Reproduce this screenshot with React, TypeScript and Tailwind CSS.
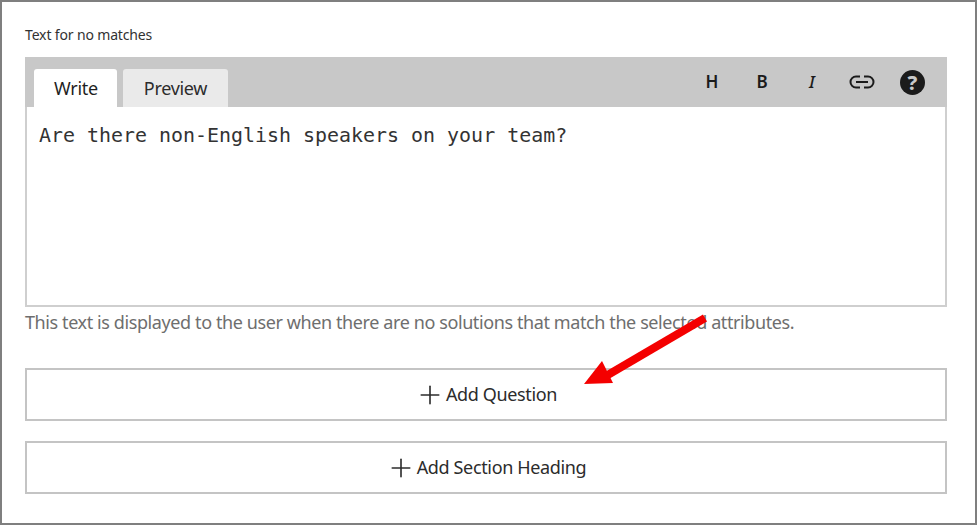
import { Plus } from "lucide-react";

const sans = "font-['Noto_Sans','Open_Sans',sans-serif]";

function AddButton({ label }: { label: string }) {
  return (
    <button className="flex h-[53px] w-full items-center justify-center gap-[1px] border-2 border-[#c4c4c4] bg-white text-[#2c2c2c]">
      <Plus size={30} strokeWidth={1.3} />
      <span className="text-[18px] tracking-[-0.35px]">{label}</span>
    </button>
  );
}

export default function App() {
  return (
    <div className={`relative h-[525px] w-[977px] overflow-hidden bg-white ${sans}`}>
      <div className="flex h-[525px] w-[977px] flex-col border-2 border-[#7f7f7f] pl-[23px] pr-[28px] pt-[25px]">
        <label className="text-[14px] leading-[16px] tracking-[-0.15px] text-[#323232]">Text for no matches</label>

        <div className="mt-[14px] flex h-[50px] items-end justify-between bg-[#c8c8c8] pl-[9px] pr-[22px]">
          <div className="flex gap-[6px]">
            <div className="flex h-[38px] w-[83px] items-center justify-center rounded-t-[3px] bg-white pl-[1px] text-[18px] tracking-[-0.3px] text-[#1f1f1f]">
              Write
            </div>
            <div className="flex h-[38px] w-[105px] items-center justify-center rounded-t-[3px] bg-[#eaeaea] text-[18px] tracking-[-0.3px] text-[#2c2c2c]">
              Preview
            </div>
          </div>
          <div className="flex h-[50px] items-center text-[#1b1b1b]">
            <span className="w-[14px] text-center text-[17px] font-semibold">H</span>
            <span className="ml-[37px] w-[12px] text-center text-[17px] font-semibold">B</span>
            <span className="ml-[41px] w-[6px] text-center text-[17px] font-medium italic">I</span>
            <svg viewBox="0 0 26 14" className="ml-[34px] h-[14px] w-[26px]" fill="none" stroke="currentColor" strokeWidth="2">
              <path d="M11 1.5 H7 a5.5 5.5 0 0 0 0 11 h4" />
              <path d="M15 1.5 h4 a5.5 5.5 0 0 1 0 11 h-4" />
              <path d="M7 7 H19" />
            </svg>
            <svg viewBox="0 0 25 25" className="ml-[25px] h-[25px] w-[25px]">
              <circle cx="12.5" cy="12.5" r="12.5" fill="#1b1b1b" />
              <text x="12.5" y="20" textAnchor="middle" fontSize="20" fontWeight="800" fill="#c8c8c8" fontFamily="Noto Sans, sans-serif">?</text>
            </svg>
          </div>
        </div>

        <div className="h-[200px] border-x-2 border-b-2 border-[#cfcfcf] bg-white px-[12px] pt-[15px] font-['DejaVu_Sans_Mono',monospace] text-[19.95px] leading-[26px] text-[#333333]">
          Are there non-English speakers on your team?
        </div>

        <p className="mt-[3px] text-[18px] leading-[24px] tracking-[-0.4px] text-[#6e6e6e]">
          This text is displayed to the user when there are no solutions that match the selected attributes.
        </p>

        <div className="mt-[34px] flex flex-col gap-[20px]">
          <AddButton label="Add Question" />
          <AddButton label="Add Section Heading" />
        </div>
      </div>

      {/* annotation arrow */}
      <svg viewBox="0 0 977 525" className="pointer-events-none absolute inset-0 h-[525px] w-[977px]">
        <path d="M705 318 L606 376" stroke="#f40000" strokeWidth="8" fill="none" />
        <path d="M584 384 L602 361 L613 383 Z" fill="#f40000" />
      </svg>
    </div>
  );
}
